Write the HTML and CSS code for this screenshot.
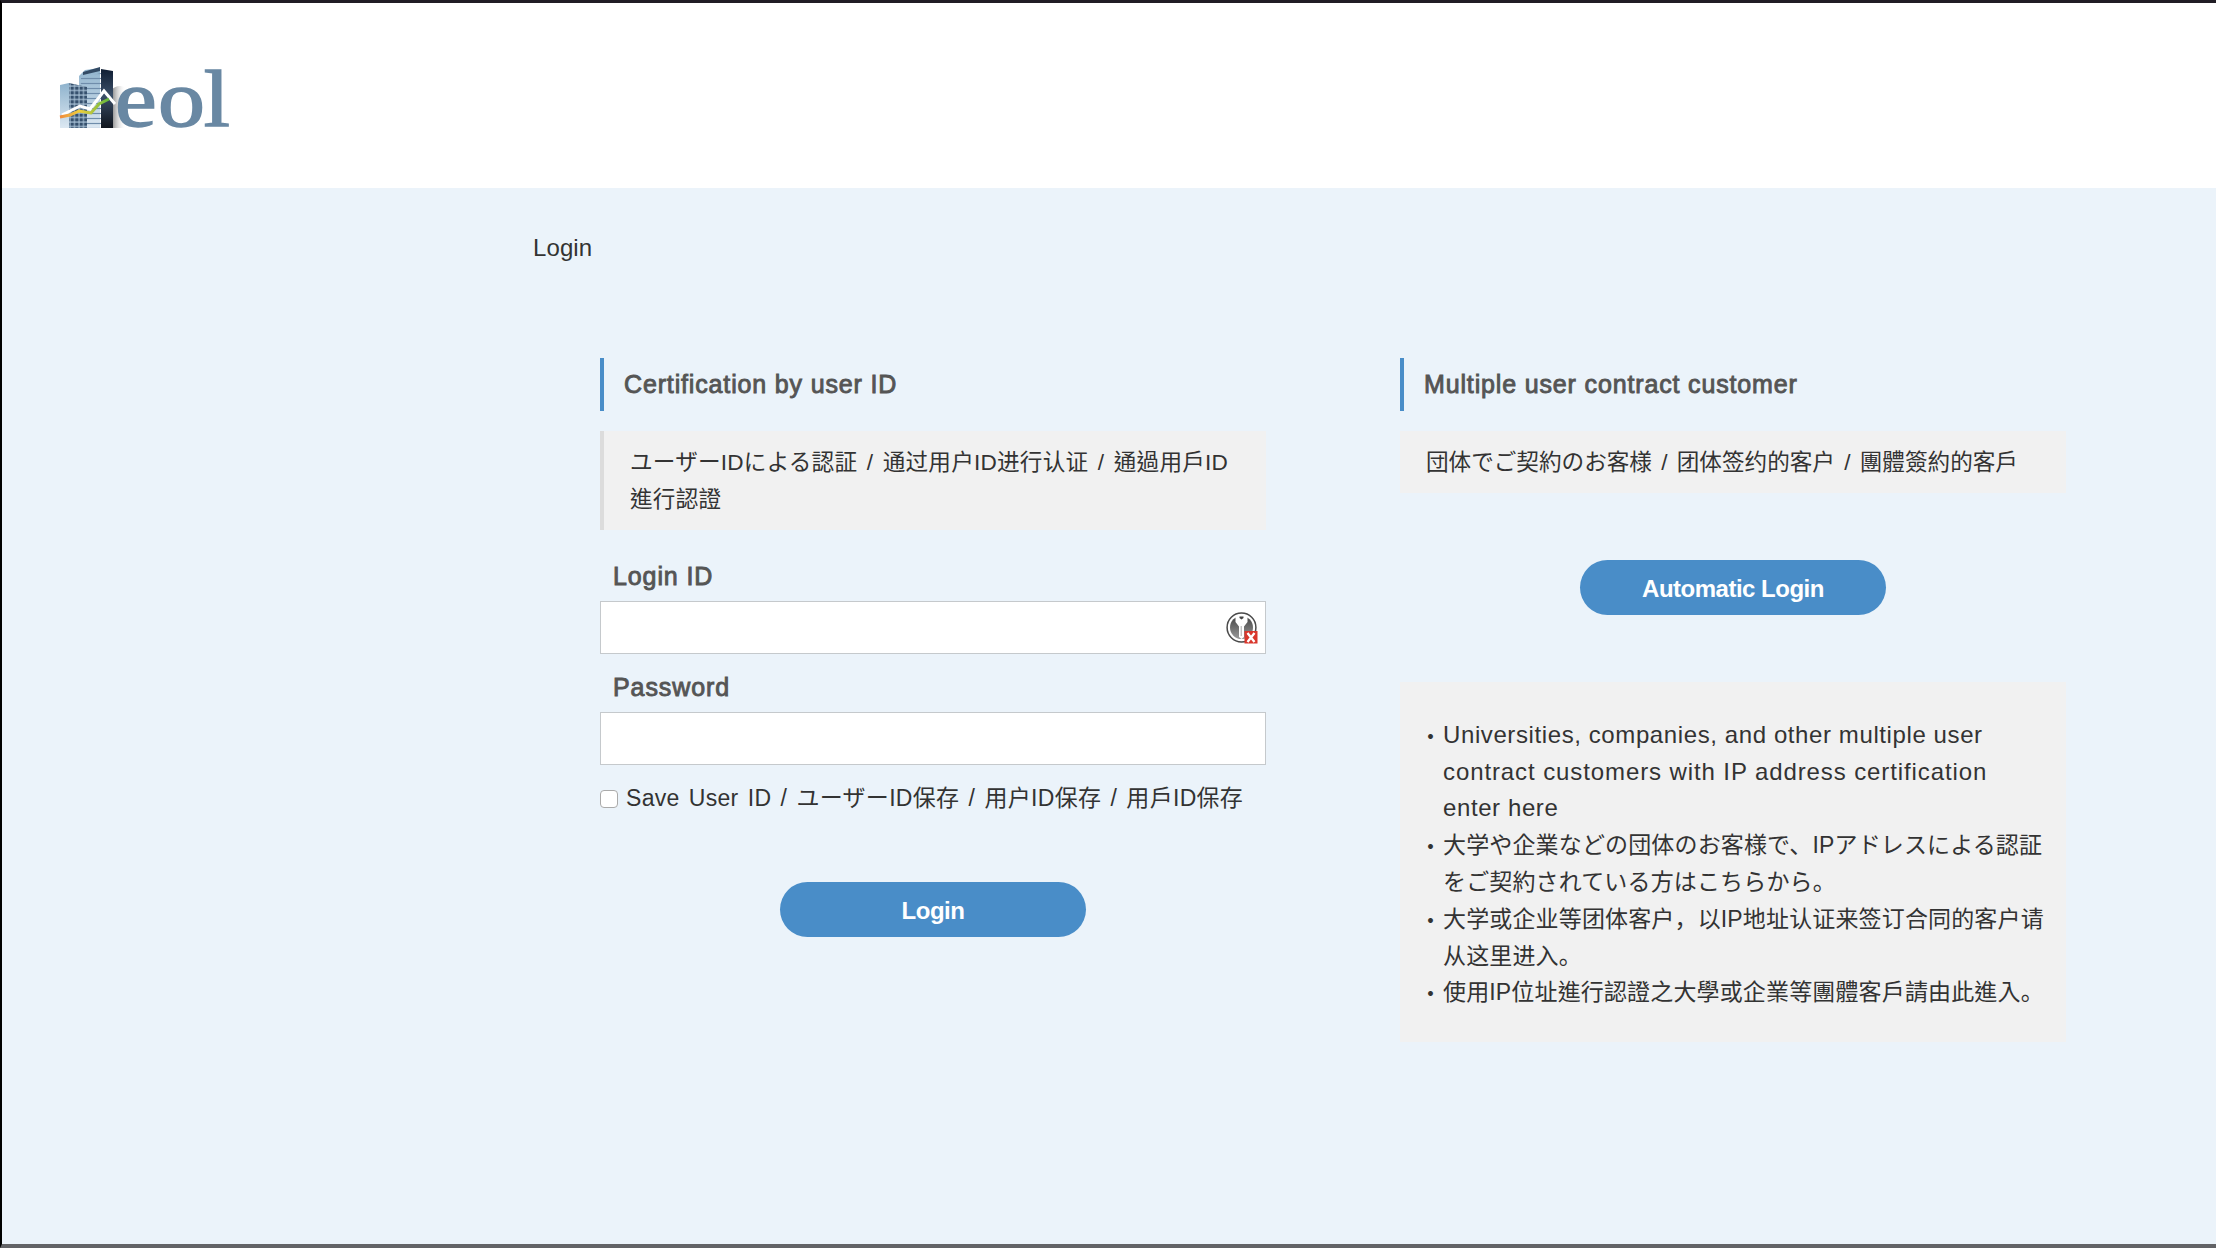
FILE: index.html
```
<!DOCTYPE html>
<html lang="ja">
<head>
  <meta charset="UTF-8" />
  <title>eol - Login</title>
  <link rel="stylesheet" href="styles.css">
</head>
<body>

  <header class="header">
    <svg class="logo" viewBox="0 0 180 80" role="img" aria-label="eol">
      <defs>
        <linearGradient id="light" x1="0" y1="0" x2="0" y2="1">
          <stop offset="0" stop-color="#8fb3cd" />
          <stop offset="1" stop-color="#dce8f2" />
        </linearGradient>
        <linearGradient id="dark" x1="0" y1="0" x2="0" y2="1">
          <stop offset="0" stop-color="#101e33" />
          <stop offset="0.45" stop-color="#3b4f68" />
          <stop offset="1" stop-color="#10151d" />
        </linearGradient>
        <linearGradient id="line" x1="0" y1="0" x2="1" y2="0">
          <stop offset="0" stop-color="#f08a3c" />
          <stop offset="0.4" stop-color="#f0cf3c" />
          <stop offset="1" stop-color="#62b83c" />
        </linearGradient>
        <linearGradient id="shade" x1="0" y1="0" x2="1" y2="0">
          <stop offset="0" stop-color="#333333" stop-opacity="0.75" />
          <stop offset="1" stop-color="#ffffff" stop-opacity="0" />
        </linearGradient>
        <pattern id="floors" width="8" height="5" patternUnits="userSpaceOnUse">
          <path d="M0 1.5H8" stroke="#6f8dab" stroke-width="1.2" />
        </pattern>
        <pattern id="windows" width="4.5" height="4.5" patternUnits="userSpaceOnUse">
          <path d="M0 1H4.5M1 0V4.5" stroke="#adc6da" stroke-width="1" />
        </pattern>
      </defs>
      <g transform="translate(2 4)">
        <path d="M50 24Q58 16 66 21V61H50Z" fill="url(#shade)" />
        <!-- tall building -->
        <path d="M19 9L25 3L40 1V61H19Z" fill="url(#light)" />
        <path d="M21 11L41 6V61H19Z" fill="url(#floors)" />
        <path d="M23 5L40 0V4L23 8Z" fill="#334b65" />
        <path d="M41 2L53 4V61H41Z" fill="url(#dark)" />
        <!-- small building -->
        <path d="M0 18L9 16V61H0Z" fill="url(#light)" />
        <path d="M9 16L27 20V61H9Z" fill="#36516e" />
        <path d="M9 16L27 20V61H9Z" fill="url(#windows)" />
        <!-- chart lines -->
        <path d="M2 48L20 39L30 42L44 24L55 37" fill="none" stroke="#ffffff" stroke-width="3" />
        <path d="M0 50L10 48L19 44L31 46L39 37L49 32" fill="none" stroke="url(#line)" stroke-width="3" />
      </g>
      <text class="logo-text" transform="translate(57 62.500) scale(1.16 1)" x="0 37 76.500" y="0">eol</text>
    </svg>
  </header>

  <main class="main">
    <h1>Login</h1>

    <div class="columns">
      <!-- user ID -->
      <section class="column">
        <h2>Certification by user ID</h2>
        <p class="note note-border">ユーザーIDによる認証 / <span lang="zh-CN">通过用户ID进行认证</span> / <span lang="zh-TW">通過用戶ID<br>進行認證</span></p>

        <form>
          <label class="label" for="loginId">Login ID</label>
          <div class="field">
            <input type="text" class="input" id="loginId" />
            <svg class="key" viewBox="0 0 32 32">
              <defs>
                <linearGradient id="disc" x1="0" y1="0" x2="0" y2="1">
                  <stop offset="0" stop-color="#444444" />
                  <stop offset="1" stop-color="#999999" />
                </linearGradient>
              </defs>
              <circle cx="15.500" cy="15.500" r="14.400" fill="#ffffff" stroke="#4a4a4a" stroke-width="1.500" />
              <circle cx="15.500" cy="15.500" r="11.500" fill="url(#disc)" />
              <path d="M9.500 3.500H21.500V10L18 14.500V25L15.500 27L13 25V14.500L9.500 10Z" fill="#ffffff" />
              <path d="M13.500 4.500H17.500V6L15.500 7.500L13.500 6Z" fill="#444444" />
              <path d="M15.200 14V24" stroke="#aaaaaa" stroke-width="1" />
              <rect x="18.500" y="19" width="13" height="12.500" fill="#d9372c" />
              <path d="M21.500 21L28.500 30M28.500 21L21.500 30" stroke="#ffffff" stroke-width="2.300" />
            </svg>
          </div>
          <label class="label" for="password">Password</label>
          <div class="field">
            <input type="password" class="input" id="password" />
          </div>
          <label class="save">
            <input type="checkbox" />
            <span>Save User ID / ユーザーID保存 / <span lang="zh-CN">用户ID保存</span> / <span lang="zh-TW">用戶ID保存</span></span>
          </label>
          <button type="button" class="btn">Login</button>
        </form>
      </section>

      <!-- IP address -->
      <section class="column">
        <h2>Multiple user contract customer</h2>
        <p class="note">団体でご契約のお客様 / <span lang="zh-CN">团体签约的客户</span> / <span lang="zh-TW">團體簽約的客戶</span></p>
        <button type="button" class="btn btn-auto">Automatic Login</button>
        <ul class="info">
          <li lang="en">Universities, companies, and other multiple user<br><span class="wide">contract customers with IP address certification</span><br>enter here</li>
          <li>大学や企業などの団体のお客様で、IPアドレスによる認証<br>をご契約されている方はこちらから。</li>
          <li lang="zh-CN">大学或企业等团体客户，以IP地址认证来签订合同的客户请<br>从这里进入。</li>
          <li lang="zh-TW">使用IP位址進行認證之大學或企業等團體客戶請由此進入<span lang="ja">。</span></li>
        </ul>
      </section>
    </div>
  </main>

</body>
</html>
```
FILE: styles.css
```
* {
  box-sizing: border-box;
}

body {
  margin: 0;
  height: 1248px;
  overflow: hidden;
  display: flex;
  flex-direction: column;
  border-top: 3px solid #201d25;
  border-left: 2px solid #000;
  border-bottom: 4px solid #626366;
  background: #ebf3fa;
  color: #333;
  font-family: "Liberation Sans", "Noto Sans CJK JP", sans-serif;
  font-size: 23px;
  line-height: 36.8px;
  letter-spacing: 0.3px;
}

:lang(zh-CN) {
  font-family: "Liberation Sans", "Noto Sans CJK SC", sans-serif;
}

:lang(zh-TW) {
  font-family: "Liberation Sans", "Noto Sans CJK TC", sans-serif;
}

.header {
  height: 185px;
  padding: 60px 0 0 56px;
  background: #fff;
}

.logo {
  display: block;
  width: 180px;
  height: 80px;
  overflow: visible;
}

.logo-text {
  font-family: "Liberation Serif", serif;
  font-size: 81px;
  letter-spacing: 0;
  fill: #6988a3;
  stroke: #6988a3;
  stroke-width: 1.5px;
}

h1 {
  margin: 41px 0 0 531px;
  font-size: 24px;
  font-weight: normal;
  line-height: 37px;
  letter-spacing: 0.1px;
}

.columns {
  display: grid;
  grid-template-columns: 666px 666px;
  gap: 134px;
  margin: 92px 0 0 598px;
}

h2 {
  height: 53px;
  margin: 0 0 20px;
  padding-left: 20px;
  border-left: 4px solid #498dc8;
  color: #555;
  font-size: 25px;
  font-weight: normal;
  line-height: 53px;
  letter-spacing: 0.85px;
  -webkit-text-stroke: 0.9px #555;
}

.note {
  margin: 0;
  padding: 14px 0 11px 26px;
  background: #f1f1f1;
  font-size: 22.6px;
  letter-spacing: 0;
  word-spacing: 3px;
  white-space: nowrap;
}

.note-border {
  border-left: 4px solid #dcdcdc;
  letter-spacing: 0.22px;
}

.label {
  display: block;
  height: 58px;
  padding-left: 13px;
  color: #555;
  font-size: 25px;
  line-height: 66px;
  letter-spacing: 0.9px;
  -webkit-text-stroke: 0.9px #555;
}

form .label:first-child {
  height: 71px;
  line-height: 93px;
}

.field {
  position: relative;
}

.input {
  display: block;
  width: 100%;
  height: 53px;
  border: 1px solid #c5c9cc;
  background: #fff;
  outline: none;
}

.key {
  position: absolute;
  top: 11px;
  right: 8px;
  width: 32px;
  height: 32px;
}

.save {
  display: flex;
  align-items: center;
  gap: 8px;
  margin-top: 15px;
  word-spacing: 2.5px;
  white-space: nowrap;
}

.save input {
  appearance: none;
  width: 18px;
  height: 18px;
  margin: 3px 0 0;
  border: 1px solid #aaa;
  border-radius: 4px;
  background: #fff;
}

.btn {
  display: block;
  width: 306px;
  height: 55px;
  margin: 66px auto 0;
  padding: 3px 0 0;
  border: none;
  border-radius: 28px;
  background: #498dc8;
  color: #fff;
  font-family: "Liberation Sans", sans-serif;
  font-size: 24px;
  font-weight: bold;
  letter-spacing: -0.5px;
}

.btn-auto {
  margin: 67px auto;
}

.info {
  margin: 0;
  padding: 35px 0 31px 43px;
  background: #f1f1f1;
  letter-spacing: 0.15px;
  list-style: none;
  white-space: nowrap;
}

.info li:lang(en) {
  font-size: 24px;
  letter-spacing: 0.6px;
}

.info .wide {
  letter-spacing: 0.9px;
}

.info li::before {
  content: "・";
  font-family: "Noto Sans CJK JP", sans-serif;
  font-size: 23px;
  float: left;
  width: 23px;
  margin-left: -24px;
}
```
